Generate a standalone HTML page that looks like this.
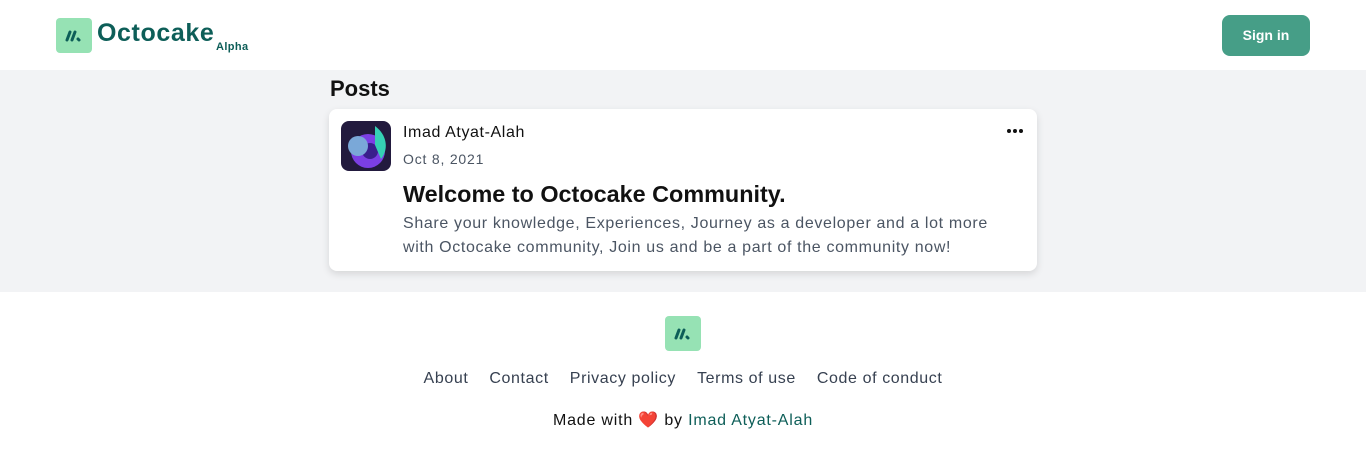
<!DOCTYPE html>
<html><head><meta charset="utf-8"><style>
body{margin:0;width:1366px;height:455px;font-family:"Liberation Sans",sans-serif;background:#fff;overflow:hidden;position:relative}
.hdr{height:70px;position:relative}
.logo{position:absolute;left:56px;top:18px;width:36px;height:35px;background:#96e2b4;border-radius:4px}
.brand{position:absolute;left:97px;top:19px;font-size:25px;font-weight:bold;color:#0d5e58;letter-spacing:.6px}
.alpha{position:absolute;left:216px;top:41px;font-size:11px;font-weight:bold;color:#0d5e58;letter-spacing:.4px}
.btn{position:absolute;left:1222px;top:15px;width:88px;height:41px;background:#469e87;border-radius:8px;color:#fff;font-size:14px;font-weight:bold;text-align:center;line-height:41px}
.main{position:absolute;top:70px;left:0;width:1366px;height:222px;background:#f2f3f5}
.posts{position:absolute;left:330px;top:6px;font-size:22px;font-weight:bold;color:#111}
.card{position:absolute;left:329px;top:39px;width:708px;height:162px;background:#fff;border-radius:8px;box-shadow:0 3px 8px rgba(0,0,0,.12)}
.av{position:absolute;left:12px;top:12px;width:50px;height:50px;border-radius:8px;background:#221a3e;overflow:hidden}
.name{position:absolute;left:74px;top:15px;font-size:16px;color:#111;letter-spacing:.6px}
.date{position:absolute;left:74px;top:42px;font-size:14px;color:#4b5563;letter-spacing:.8px}
.title{position:absolute;left:74px;top:72px;font-size:23.4px;font-weight:bold;color:#111}
.desc{position:absolute;left:74px;top:103px;width:620px;font-size:16px;line-height:24px;color:#4b5563;letter-spacing:.65px}
.dots{position:absolute;left:678px;top:20px;width:18px;height:4px;display:flex;gap:2px}
.dots i{display:block;width:4px;height:4px;border-radius:50%;background:#111}
.flogo{position:absolute;left:665px;top:316px;width:36px;height:35px;background:#96e2b4;border-radius:4px}
.links{position:absolute;top:370px;left:0;width:1366px;text-align:center;font-size:16px;color:#374151;letter-spacing:.6px}
.links span{margin:0 8px}
.made{position:absolute;top:410px;left:0;width:1366px;text-align:center;font-size:16px;color:#111;letter-spacing:.8px}
.made a{color:#0d5e58;text-decoration:none}
</style></head><body>
<div class="hdr">
<div class="logo"><svg width="36" height="35"><g stroke="#0d5e58" stroke-width="3" stroke-linecap="round"><line x1="11" y1="22" x2="14" y2="14"/><line x1="16" y1="22" x2="19" y2="14"/><line x1="22" y1="21" x2="23" y2="22"/></g></svg></div>
<div class="brand">Octocake</div><div class="alpha">Alpha</div>
<div class="btn">Sign in</div>
</div>
<div class="main">
<div class="posts">Posts</div>
<div class="card">
<div class="av"><svg width="50" height="50"><circle cx="27" cy="30" r="17" fill="#7b3fe4"/><circle cx="29" cy="30" r="8" fill="#3a1e8c"/><path d="M34 5 C46 14 48 28 40 38 L34 24Z" fill="#35d0b4"/><circle cx="17" cy="25" r="10" fill="#7aa8d8"/></svg></div>
<div class="name">Imad Atyat-Alah</div>
<div class="date">Oct 8, 2021</div>
<div class="dots"><i></i><i></i><i></i></div>
<div class="title">Welcome to Octocake Community.</div>
<div class="desc">Share your knowledge, Experiences, Journey as a developer and a lot more with Octocake community, Join us and be a part of the community now!</div>
</div>
</div>
<div class="flogo"><svg width="36" height="35"><g stroke="#0d5e58" stroke-width="3" stroke-linecap="round"><line x1="11" y1="22" x2="14" y2="14"/><line x1="16" y1="22" x2="19" y2="14"/><line x1="22" y1="21" x2="23" y2="22"/></g></svg></div>
<div class="links"><span>About</span> <span>Contact</span> <span>Privacy policy</span> <span>Terms of use</span> <span>Code of conduct</span></div>
<div class="made">Made with <span style="color:#e53935">❤️</span> by <a>Imad Atyat-Alah</a></div>
</body></html>
